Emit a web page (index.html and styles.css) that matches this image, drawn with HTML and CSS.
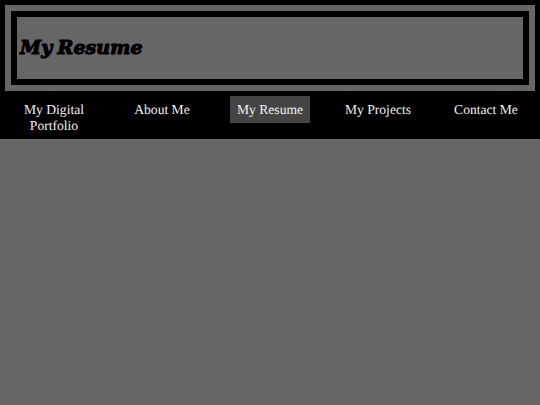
FILE: index.html
```html
<!DOCTYPE html>
<html lang="en">
<head>
<meta charset="utf-8">
<title>My Resume</title>
<link rel="stylesheet" href="styles.css">
</head>
<body>
<header class="site-header">
  <div class="outer-frame">
    <div class="inner-frame">
      <h1 class="title">My Resume</h1>
    </div>
  </div>
</header>
<nav class="nav">
  <a class="nav-link" href="#">My Digital Portfolio</a>
  <a class="nav-link" href="#">About Me</a>
  <a class="nav-link active" href="#">My Resume</a>
  <a class="nav-link" href="#">My Projects</a>
  <a class="nav-link" href="#">Contact Me</a>
</nav>
<main class="content"></main>
</body>
</html>
```
FILE: styles.css
```css
html, body {
  margin: 0;
  height: 100%;
}
body {
  display: flex;
  flex-direction: column;
  background: #666;
  font-family: "Liberation Serif", serif;
}
.site-header {
  background: #000;
  padding: 5px 5px 0;
}
.outer-frame {
  background: #000;
  border: 6px solid #666;
  padding: 0;
}
.inner-frame {
  display: flex;
  align-items: center;
  height: 62px;
  background: #666;
  border: 6px solid #000;
  padding: 0 3px;
}
.title {
  margin: 0 0 2px;
  font-family: "DejaVu Serif", serif;
  font-size: 19px;
  font-style: italic;
  font-weight: 700;
  letter-spacing: 0.1px;
  word-spacing: -1.5px;
  color: #000;
  -webkit-text-stroke: 1.1px #000;
}
.nav {
  display: grid;
  grid-template-columns: repeat(5, 1fr);
  align-items: start;
  justify-items: center;
  background: #000;
  padding: 5px 0 0;
  height: 43px;
}
.nav-link {
  display: block;
  padding: 6px 7px 5px;
  font-size: 13.6px;
  line-height: 16px;
  color: #f2f2f2;
  text-align: center;
  text-decoration: none;
  text-rendering: geometricPrecision;
}
.active {
  background: #444;
}
.content {
  flex: 1;
}
```
